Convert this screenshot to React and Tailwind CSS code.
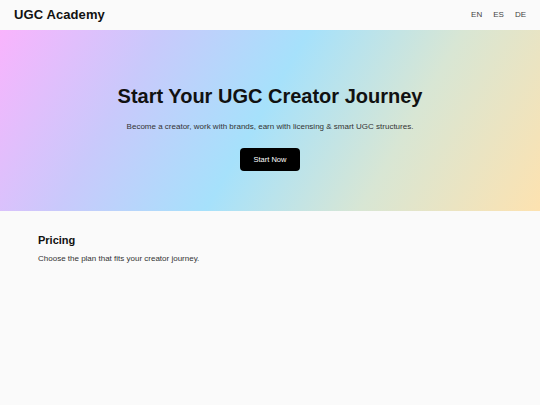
import React from 'react';

const App = () => {
  return (
    <div className="min-h-[405px] bg-[#fafafa] font-['Liberation_Sans',Arial,sans-serif] text-[#111]">
      {/* Header */}
      <header className="h-[30px] flex items-center justify-between pl-[14px] pr-[14px]">
        <div className="text-[13px] font-bold tracking-[0.1px]">UGC Academy</div>
        <nav className="flex items-center gap-[11px] text-[8px] text-[#444]">
          <span>EN</span>
          <span>ES</span>
          <span>DE</span>
        </nav>
      </header>

      {/* Hero */}
      <section className="h-[181px] flex flex-col items-center bg-[linear-gradient(120deg,#f9b4fd_0%,#c9c9fb_25%,#a6e1fb_48%,#d8e6d4_72%,#fde2b0_100%)]">
        <h1 className="mt-[54px] text-[20px] font-bold leading-[25px]">Start Your UGC Creator Journey</h1>
        <p className="mt-[12px] text-[8px] text-[#333]">Become a creator, work with brands, earn with licensing &amp; smart UGC structures.</p>
        <button className="mt-[15px] w-[60px] h-[23px] bg-black text-white text-[7.5px] rounded-[4px]">Start Now</button>
      </section>

      {/* Pricing */}
      <section className="pl-[38px] pt-[22px]">
        <h2 className="text-[11px] font-bold leading-[14px]">Pricing</h2>
        <p className="mt-[6px] text-[8px] text-[#333]">Choose the plan that fits your creator journey.</p>
      </section>
    </div>
  );
};

export default App;
